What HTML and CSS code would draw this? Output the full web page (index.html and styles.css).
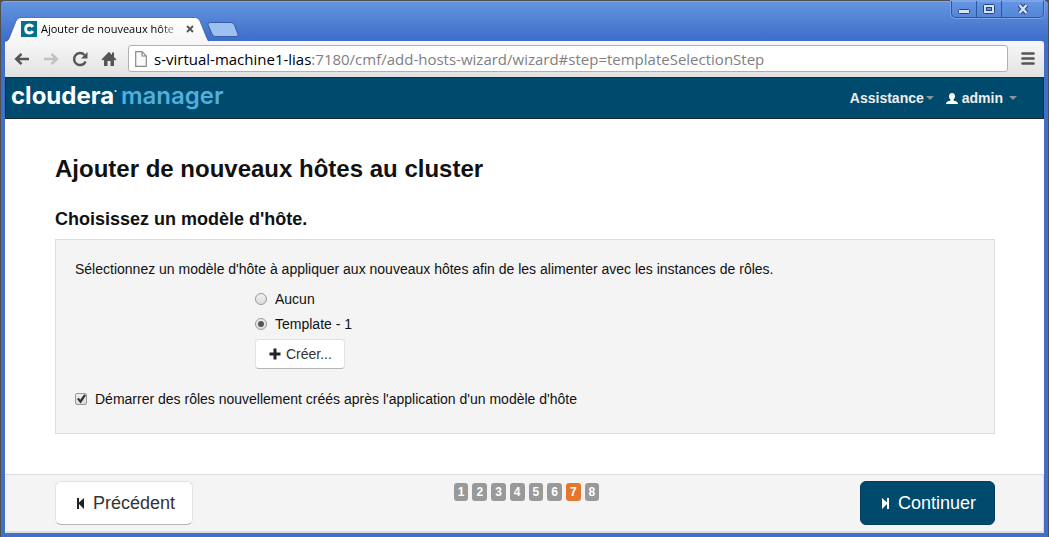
FILE: index.html
```html
<!DOCTYPE html>
<html lang="fr">
<head>
<meta charset="utf-8">
<title>Ajouter de nouveaux hôtes</title>
<link rel="stylesheet" href="styles.css">
</head>
<body>
<div class="window">
  <div class="titlebar">
    <div class="tab">
      <svg class="tab-shape" width="204" height="25" viewBox="0 0 204 25" aria-hidden="true">
        <defs><linearGradient id="tabfill" x1="0" y1="0" x2="0" y2="1"><stop offset="0" stop-color="#fff"/><stop offset="1" stop-color="#f6f6f6"/></linearGradient></defs>
        <path d="M0 25C3 24 4 22 5 19L11 4Q12.500 .5 16 .5H190Q193.500 .5 195 4L201 19Q203 24 204 25Z" fill="url(#tabfill)"/>
        <path d="M0 24.500C3 24 4 22 5 19L11 4Q12.500 .5 16 .5H190Q193.500 .5 195 4L201 19Q203 24 204 24.500" fill="none" stroke="#3558a0" stroke-opacity=".75"/>
      </svg>
      <svg class="favicon" width="16" height="16" viewBox="0 0 16 16" aria-hidden="true"><rect width="16" height="16" fill="#04718b"/><path d="M11.800 6Q10.800 4 8.200 4Q4.600 4.200 4.600 8Q4.600 11.800 8.200 12Q10.800 12 11.800 10" fill="none" stroke="#fff" stroke-width="2.800"/></svg>
      <span class="tab-title">Ajouter de nouveaux hôte</span>
      <button class="tab-close" aria-label="Fermer l'onglet"><svg width="8" height="8" viewBox="0 0 8 8"><path d="M1 1l6 6M7 1l-6 6" stroke="#555" stroke-width="1.800"/></svg></button>
    </div>
    <button class="new-tab" aria-label="Nouvel onglet"><svg width="32" height="16" viewBox="0 0 32 16"><path d="M3.500 .5H24Q26.500 .5 27.500 3L31 12.500Q31.500 14.500 29 14.500H8.500Q6 14.500 5 12L1 2.500Q.5 .5 3.500 .5Z" fill="#9cc0f0" stroke="#375da8"/></svg></button>
    <div class="window-controls">
      <button aria-label="Réduire"><svg width="12" height="12" viewBox="0 0 12 12"><rect x=".5" y="6.500" width="11" height="4" rx="1" fill="#d5e2f8" stroke="#26447c"/></svg></button>
      <button aria-label="Agrandir"><svg width="12" height="12" viewBox="0 0 12 12"><rect x=".5" y="1.500" width="11" height="9" rx="1" fill="#d5e2f8" stroke="#26447c"/><rect x="3.500" y="4.500" width="5" height="3" fill="#6590d8" stroke="#26447c"/></svg></button>
      <button class="wide" aria-label="Fermer"><svg width="12" height="12" viewBox="0 0 12 12"><path d="M2.500 2l7 8M9.500 2l-7 8" stroke="#26447c" stroke-width="4.500"/><path d="M2.500 2l7 8M9.500 2l-7 8" stroke="#d5e2f8" stroke-width="2.500"/></svg></button>
    </div>
  </div>
  <div class="toolbar">
    <button aria-label="Précédente"><svg width="16" height="16" viewBox="0 0 16 16"><path d="M15 8H3M7.500 2.800L2.200 8L7.500 13.200" fill="none" stroke="#555" stroke-width="2.500"/></svg></button>
    <button aria-label="Suivante"><svg width="16" height="16" viewBox="0 0 16 16"><path d="M1 8H13M8.500 2.800L13.800 8L8.500 13.200" fill="none" stroke="#c0c0c0" stroke-width="2.500"/></svg></button>
    <button aria-label="Actualiser"><svg width="16" height="16" viewBox="0 0 16 16"><path d="M12.500 4A6 6 0 1 0 13.600 10.500" fill="none" stroke="#555" stroke-width="2.500"/><path d="M15.500 1V7.500H9Z" fill="#555"/></svg></button>
    <button aria-label="Accueil"><svg width="16" height="16" viewBox="0 0 16 16"><path d="M8 .8L.5 8.500L2 9.500L3 8.700V15H6.500V10H9.500V15H13V8.700L14 9.500L15.500 8.500L13 6V1.500H11V4Z" fill="#555"/></svg></button>
    <label class="omnibox">
      <svg width="12" height="16" viewBox="0 0 12 16" aria-hidden="true"><path d="M.7 .7H7L11.300 5V15.300H.7ZM7 .7V5H11.300" fill="#fafafa" stroke="#8a8a8a" stroke-width="1.200"/></svg>
      <span class="url"><span class="url-host">s-virtual-machine1-lias</span>:7180/cmf/add-hosts-wizard/wizard#step=templateSelectionStep</span>
    </label>
    <button class="menu" aria-label="Menu"><svg width="14" height="14" viewBox="0 0 14 14"><path d="M1.500 1.500H12.500M1.500 6.500H12.500M1.500 11.500H12.500" stroke="#555" stroke-width="2.600" stroke-linecap="round"/></svg></button>
  </div>
  <div class="page">
    <header class="navbar">
      <a class="brand" href="#"><span>cloudera<sup>•</sup></span><span class="brand-product">manager</span></a>
      <nav class="nav-links">
        <a href="#">Assistance<span class="caret"></span></a>
        <a href="#"><svg class="user" width="12" height="11" viewBox="0 0 12 11" aria-hidden="true"><path d="M6 0C8 0 9 1.300 9 3.200C9 4.800 8.300 6 7.500 6.600V7.500L10.500 8.600Q12 9.200 12 11H0Q0 9.200 1.500 8.600L4.500 7.500V6.600C3.700 6 3 4.800 3 3.200C3 1.300 4 0 6 0Z" fill="#fff"/></svg>admin<span class="caret caret-spaced"></span></a>
      </nav>
    </header>
    <main class="content">
      <h1>Ajouter de nouveaux hôtes au cluster</h1>
      <h2>Choisissez un modèle d'hôte.</h2>
      <form class="panel">
        <p>Sélectionnez un modèle d'hôte à appliquer aux nouveaux hôtes afin de les alimenter avec les instances de rôles.</p>
        <div class="templates">
          <label class="option"><input type="radio" name="template">Aucun</label>
          <label class="option"><input type="radio" name="template" checked>Template - 1</label>
          <button class="btn btn-small" type="button"><svg width="12" height="12" viewBox="0 0 12 12" aria-hidden="true"><path d="M6 .5V11.500M.5 6H11.500" stroke="#222" stroke-width="3"/></svg>Créer...</button>
        </div>
        <label class="option"><input type="checkbox" checked>Démarrer des rôles nouvellement créés après l'application d'un modèle d'hôte</label>
      </form>
    </main>
    <footer class="actions">
      <button class="btn btn-large"><svg width="9" height="12" viewBox="0 0 9 12" aria-hidden="true"><path d="M1 1H3V5.500L8 1V12L3 7V12H1Z" fill="#222"/></svg>Précédent</button>
      <ol class="steps"><li>1</li><li>2</li><li>3</li><li>4</li><li>5</li><li>6</li><li class="current">7</li><li>8</li></ol>
      <button class="btn btn-large btn-primary"><svg width="9" height="12" viewBox="0 0 9 12" aria-hidden="true"><path d="M8 1H6V5.500L1 1V12L6 7V12H8Z" fill="#fff"/></svg>Continuer</button>
    </footer>
  </div>
</div>
</body>
</html>
```
FILE: styles.css
```css
* { box-sizing: border-box; }

body {
  margin: 0;
  background: #505050;
  font: 14px/20px "Liberation Sans", Arial, sans-serif;
  color: #111;
}

button { padding: 0; border: 0; background: none; font: inherit; color: inherit; }
svg { display: block; flex: none; }
a { color: inherit; text-decoration: none; }

/* Browser window */
.window {
  display: flex;
  flex-direction: column;
  min-height: 100vh;
  padding: 0 4px 4px;
  border: 1px solid #505050;
  border-radius: 4px 4px 0 0;
  background: linear-gradient(#6596e2, #4070ca 36px, #4070ca);
  box-shadow: inset 0 1px #7fa8e8;
}

.titlebar { display: flex; align-items: flex-end; height: 40px; }

.tab {
  position: relative;
  display: flex;
  align-items: center;
  width: 202px;
  height: 24px;
  padding: 0 10px 0 16px;
}
.tab-shape { position: absolute; left: 0; top: 0; }
.favicon { position: relative; margin-right: 4px; }
.tab-title {
  position: relative;
  width: 140px;
  white-space: nowrap;
  font: 11px/20px "Open Sans", "Noto Sans", sans-serif;
  color: #000;
  -webkit-mask-image: linear-gradient(90deg, #000 85%, transparent);
  mask-image: linear-gradient(90deg, #000 85%, transparent);
}
.tab-close { position: relative; margin-left: 5px; }
.new-tab { margin-bottom: 3px; }

.window-controls {
  display: flex;
  align-self: flex-start;
  margin-left: auto;
  border: 1px solid #2f559f;
  border-top: 0;
  border-radius: 0 0 5px 5px;
  box-shadow: 0 0 0 1px #7ba2e4;
}
.window-controls button {
  display: flex;
  align-items: center;
  justify-content: center;
  width: 25px;
  height: 16px;
  border-right: 1px solid #2f559f;
}
.window-controls .wide { width: 41px; border-right: 0; }

.toolbar {
  display: flex;
  align-items: center;
  gap: 13px;
  height: 36px;
  padding: 0 9px 1px;
  border-radius: 0 3px 0 0;
  background: linear-gradient(#f7f7f7, #e2e2e2);
}
.omnibox {
  display: flex;
  flex: 1;
  align-items: center;
  gap: 7px;
  min-width: 0;
  height: 27px;
  margin-left: -2px;
  padding: 0 6px;
  border: 1px solid #b0b0b0;
  border-radius: 3px;
  background: #fff;
}
.url {
  white-space: nowrap;
  font: 15px/24px "Open Sans", "Noto Sans", sans-serif;
  color: #808080;
}
.url-host { color: #000; }

/* Page */
.page {
  display: flex;
  flex: 1;
  flex-direction: column;
  background: #fff;
}

.navbar {
  display: flex;
  align-items: center;
  justify-content: space-between;
  height: 42px;
  padding: 0 26px 0 5px;
  border: 1px solid #1c2b33;
  background: #004b6d;
}
.brand {
  display: flex;
  gap: 4px;
  padding-bottom: 4px;
  font: 700 24px/32px Inter, sans-serif;
  color: #fff;
}
.brand sup { font-size: 6px; line-height: 0; vertical-align: 11px; }
.brand-product { font-weight: 600; color: #50afdc; }
.nav-links { display: flex; gap: 12px; font-size: 14px; font-weight: bold; color: #eee; }
.nav-links a { display: flex; align-items: center; }
.user { margin-right: 4px; }
.caret {
  margin-left: 2px;
  border: 4px solid transparent;
  border-top-color: #8a9499;
  border-bottom: 0;
}
.caret-spaced { margin-left: 6px; }

.content { flex: 1; padding: 30px 49px 40px 50px; }
h1 { margin: 0 0 20px; font-size: 24px; line-height: 40px; }
h2 { margin: 0; font-size: 18px; line-height: 20px; }

.panel {
  margin-top: 10px;
  padding: 19px 19px 24px;
  border: 1px solid #ddd;
  background: #f4f4f4;
}
.panel p { margin: 0 0 10px; }
.templates {
  display: flex;
  flex-direction: column;
  align-items: flex-start;
  gap: 5px;
  margin: 0 0 20px 180px;
}
.option { display: flex; align-items: center; gap: 8px; }
.option input {
  display: grid;
  place-items: center;
  width: 12px;
  height: 12px;
  margin: 0;
  border: 1px solid #999;
  background: linear-gradient(#eee, #ddd);
  appearance: none;
}
.option input[type="radio"] { border-radius: 50%; }
.option input[type="checkbox"] { border-radius: 2px; }
.option input[type="radio"]:checked::before {
  width: 6px;
  height: 6px;
  border-radius: 50%;
  background: #555;
  content: "";
}
.option input[type="checkbox"]:checked::before {
  width: 10px;
  height: 10px;
  background: #333;
  clip-path: polygon(10% 50%, 28% 38%, 42% 58%, 82% 2%, 100% 14%, 46% 94%);
  content: "";
}

.btn {
  display: flex;
  align-items: center;
  border: 1px solid #e2e2e2;
  border-bottom-color: #b4b4b4;
  background: #fff;
  color: #333;
}
.btn-small { gap: 5px; height: 30px; padding: 0 12px 0 13px; border-radius: 4px; }
.btn-large {
  gap: 8px;
  height: 44px;
  padding: 0 17px 0 20px;
  border-radius: 6px;
  font-size: 18px;
}
.btn-primary { padding-right: 18px; border-color: #003e5a; background: #004b6d; color: #fff; }

.actions {
  display: flex;
  align-items: flex-start;
  justify-content: space-between;
  height: 59px;
  padding: 6px 48px 0 50px;
  border: 1px solid #ddd;
  border-width: 1px 1px 2px 0;
  background: #f4f4f4;
}
.steps {
  display: flex;
  gap: 4px;
  margin: 2px 0 0;
  padding: 0;
  list-style: none;
}
.steps li {
  padding: 0 4px;
  border-radius: 3px;
  background: #999;
  font-size: 12px;
  font-weight: bold;
  line-height: 18px;
  color: #fff;
}
.steps .current { background: #e6762e; }
```
